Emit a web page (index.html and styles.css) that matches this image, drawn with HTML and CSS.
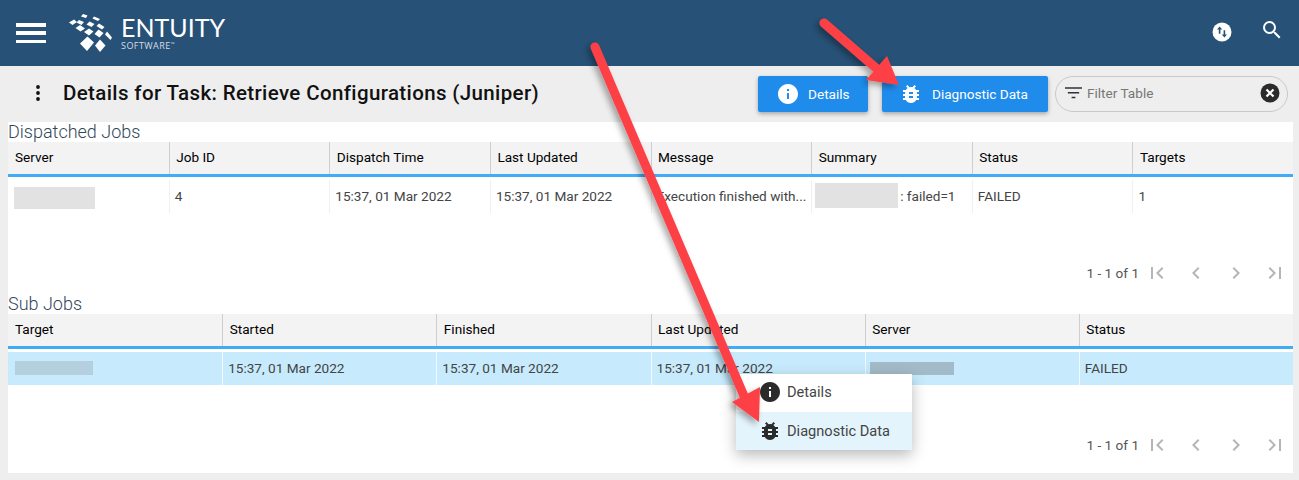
FILE: index.html
```html
<!DOCTYPE html>
<html lang="en">
<head>
<meta charset="utf-8">
<title>Details for Task</title>
<link rel="stylesheet" href="styles.css">
</head>
<body>
<header class="topbar">
  <div class="brand">
    <button class="hamburger" aria-label="Menu"><span></span><span></span><span></span></button>
    <svg class="logo-mark" viewBox="0 0 44 38" aria-hidden="true">
      <g fill="#fff">
        <path d="M14 0l4.500 1.500-1.500 2.500-5-1.500z"/><path d="M25 2.500l6 2.500-2 2-5.500-2.500z"/>
        <path d="M0 8.500l5-3 3 2.500-4.500 3z"/><path d="M10 6l5 2-2.500 3-5-2.500z"/><path d="M20.500 7.500l5 2.500-3 3-5-2.500z"/><path d="M30 9.500l5.500 3.500-2.500 2.500-5.500-3.500z"/>
        <path d="M6.500 14l4.500-3 5 3.500-4.500 3z"/><path d="M20 14.500l4.500 3-4.500 4-5-3.500z"/><path d="M29.500 15.500l5 3.500-4 4.500-5-3.500z"/><path d="M38 17.500l5 6-1.500 2.500-5.500-5.500z"/>
        <path d="M18.500 22.500l6.500 6-7 8.500-7-7.500z"/><path d="M31 25.500l5.500 6-5.500 6.500-5-6.500z"/>
      </g>
    </svg>
    <div class="wordmark">
      <div class="wordmark-main">ENTUITY</div>
      <div class="wordmark-sub">SOFTWARE<sup>™</sup></div>
    </div>
  </div>
  <div class="top-actions">
    <svg class="ico-sync" viewBox="0 0 20 20" aria-hidden="true">
      <circle cx="10" cy="10" r="9.500" fill="#fff"/>
      <path d="M7.600 4.500L5 7.400h1.800v4.300h1.600V7.400h1.800z" fill="#275176"/>
      <path d="M12.400 15.500l2.600-2.900h-1.800V8.300h-1.600v4.300H9.800z" fill="#275176"/>
    </svg>
    <svg class="ico-search" viewBox="0 0 24 24" aria-hidden="true">
      <path fill="#fff" d="M15.500 14h-.79l-.28-.27A6.470 6.470 0 0016 9.500 6.500 6.500 0 109.500 16c1.610 0 3.090-.59 4.230-1.570l.27.28v.79l5 4.990L20.490 19l-4.990-5zm-6 0C7.010 14 5 11.990 5 9.500S7.010 5 9.500 5 14 7.010 14 9.500 11.990 14 9.500 14z"/>
    </svg>
  </div>
</header>

<section class="toolbar">
  <div class="title-group">
    <svg class="ico-more" viewBox="0 0 6 18" aria-hidden="true"><circle cx="3" cy="3" r="1.900"/><circle cx="3" cy="9" r="1.900"/><circle cx="3" cy="15" r="1.900"/></svg>
    <h1 class="page-title">Details for Task: Retrieve Configurations (Juniper)</h1>
  </div>
  <div class="toolbar-actions">
    <button class="btn btn-details">
      <svg class="btn-ico" viewBox="0 0 24 24" aria-hidden="true"><path fill="#fff" d="M12 2C6.480 2 2 6.480 2 12s4.480 10 10 10 10-4.480 10-10S17.520 2 12 2zm1 15h-2v-6h2v6zm0-8h-2V7h2v2z"/></svg>
      <span>Details</span>
    </button>
    <button class="btn btn-diag">
      <svg class="btn-ico" viewBox="0 0 24 24" aria-hidden="true"><path fill="#fff" d="M20 8h-2.810a5.985 5.985 0 00-1.820-1.960L17 4.410 15.590 3l-2.170 2.170a6.002 6.002 0 00-2.830 0L8.410 3 7 4.410l1.620 1.630C7.880 6.550 7.260 7.220 6.810 8H4v2h2.090c-.05.330-.09.660-.09 1v1H4v2h2v1c0 .34.040.67.090 1H4v2h2.810c1.040 1.790 2.970 3 5.190 3s4.150-1.210 5.190-3H20v-2h-2.090c.05-.33.090-.66.090-1v-1h2v-2h-2v-1c0-.34-.04-.67-.09-1H20V8zm-6 8h-4v-2h4v2zm0-4h-4v-2h4v2z"/></svg>
      <span>Diagnostic Data</span>
    </button>
    <div class="filter">
      <svg class="ico-filter" viewBox="0 0 18 12" aria-hidden="true"><path fill="#333" d="M0 0h18v1.500H0zM3 5h12v1.500H3zM7 10h4v1.500H7z"/></svg>
      <span class="filter-text">Filter Table</span>
      <svg class="ico-clear" viewBox="0 0 20 20" aria-hidden="true"><circle cx="10" cy="10" r="9.500" fill="#2b2b2b"/><path d="M6.500 6.500l7 7M13.500 6.500l-7 7" stroke="#fff" stroke-width="2.200" fill="none"/></svg>
    </div>
  </div>
</section>

<main class="panel">
  <section class="block block-first">
    <h2 class="block-title">Dispatched Jobs</h2>
    <div class="grid grid-8 head">
      <div>Server</div><div>Job ID</div><div>Dispatch Time</div><div>Last Updated</div><div>Message</div><div>Summary</div><div>Status</div><div>Targets</div>
    </div>
    <div class="grid grid-8 row">
      <div><span class="blur blur-a"></span></div>
      <div>4</div>
      <div>15:37, 01 Mar 2022</div>
      <div>15:37, 01 Mar 2022</div>
      <div class="clip">Execution finished with...</div>
      <div class="summary"><span class="blur blur-b"></span><span>: failed=1</span></div>
      <div>FAILED</div>
      <div>1</div>
    </div>
    <div class="pager">
      <span class="pager-text">1 - 1 of 1</span>
      <svg class="pg" viewBox="0 0 24 24" aria-hidden="true"><path d="M18.410 16.590L13.820 12l4.590-4.590L17 6l-6 6 6 6zM6 6h2v12H6z"/></svg>
      <svg class="pg" viewBox="0 0 24 24" aria-hidden="true"><path d="M15.410 7.410L14 6l-6 6 6 6 1.410-1.410L10.830 12z"/></svg>
      <svg class="pg" viewBox="0 0 24 24" aria-hidden="true"><path d="M10 6L8.590 7.410 13.170 12l-4.580 4.590L10 18l6-6z"/></svg>
      <svg class="pg" viewBox="0 0 24 24" aria-hidden="true"><path d="M5.590 7.410L10.180 12l-4.590 4.590L7 18l6-6-6-6zM16 6h2v12h-2z"/></svg>
    </div>
  </section>

  <section class="block">
    <h2 class="block-title">Sub Jobs</h2>
    <div class="grid grid-6 head">
      <div>Target</div><div>Started</div><div>Finished</div><div>Last Updated</div><div>Server</div><div>Status</div>
    </div>
    <div class="grid grid-6 row row-selected">
      <div><span class="blur blur-c"></span></div>
      <div>15:37, 01 Mar 2022</div>
      <div>15:37, 01 Mar 2022</div>
      <div>15:37, 01 Mar 2022</div>
      <div><span class="blur blur-d"></span></div>
      <div>FAILED</div>
    </div>
    <div class="pager">
      <span class="pager-text">1 - 1 of 1</span>
      <svg class="pg" viewBox="0 0 24 24" aria-hidden="true"><path d="M18.410 16.590L13.820 12l4.590-4.590L17 6l-6 6 6 6zM6 6h2v12H6z"/></svg>
      <svg class="pg" viewBox="0 0 24 24" aria-hidden="true"><path d="M15.410 7.410L14 6l-6 6 6 6 1.410-1.410L10.830 12z"/></svg>
      <svg class="pg" viewBox="0 0 24 24" aria-hidden="true"><path d="M10 6L8.590 7.410 13.170 12l-4.580 4.590L10 18l6-6z"/></svg>
      <svg class="pg" viewBox="0 0 24 24" aria-hidden="true"><path d="M5.590 7.410L10.180 12l-4.590 4.590L7 18l6-6-6-6zM16 6h2v12h-2z"/></svg>
    </div>
  </section>
</main>

<div class="ctx-menu">
  <div class="ctx-item ctx-first">
    <svg class="ctx-ico" viewBox="0 0 24 24" aria-hidden="true"><path fill="#2b2b2b" d="M12 2C6.480 2 2 6.480 2 12s4.480 10 10 10 10-4.480 10-10S17.520 2 12 2zm1 15h-2v-6h2v6zm0-8h-2V7h2v2z"/></svg>
    <span>Details</span>
  </div>
  <div class="ctx-item ctx-hover">
    <svg class="ctx-ico" viewBox="0 0 24 24" aria-hidden="true"><path fill="#2b2b2b" d="M20 8h-2.810a5.985 5.985 0 00-1.820-1.960L17 4.410 15.590 3l-2.170 2.170a6.002 6.002 0 00-2.830 0L8.410 3 7 4.410l1.620 1.630C7.880 6.550 7.260 7.220 6.810 8H4v2h2.090c-.05.330-.09.660-.09 1v1H4v2h2v1c0 .34.040.67.090 1H4v2h2.810c1.040 1.790 2.970 3 5.190 3s4.150-1.210 5.190-3H20v-2h-2.090c.05-.33.090-.66.090-1v-1h2v-2h-2v-1c0-.34-.04-.67-.09-1H20V8zm-6 8h-4v-2h4v2zm0-4h-4v-2h4v2z"/></svg>
    <span>Diagnostic Data</span>
  </div>
</div>

<svg class="arrows" viewBox="0 0 1299 480" aria-hidden="true">
  <defs>
    <filter id="arrow-shadow" x="-20%" y="-20%" width="140%" height="140%">
      <feDropShadow dx="-3" dy="3" stdDeviation="3" flood-color="#000" flood-opacity=".35"/>
    </filter>
  </defs>
  <g filter="url(#arrow-shadow)" fill="#fc4145" stroke="none">
    <path d="M595 47L744 396" stroke="#fc4145" stroke-width="9" stroke-linecap="round" fill="none"/>
    <path d="M732 402L760 387 759 422z"/>
    <path d="M824 23L884 75" stroke="#fc4145" stroke-width="9" stroke-linecap="round" fill="none"/>
    <path d="M866 80L887 56 899 85z"/>
  </g>
</svg>
</body>
</html>
```

FILE: styles.css
```css
* { box-sizing: border-box; }
html, body { margin: 0; padding: 0; }
body {
  width: 1299px;
  height: 480px;
  overflow: hidden;
  position: relative;
  background: #eeeeee;
  font-family: Roboto, "Liberation Sans", sans-serif;
  font-size: 13.600px;
  color: #444;
}

.topbar {
  height: 66px;
  background: #275176;
  display: flex;
  justify-content: space-between;
  align-items: center;
  padding: 0 15px 0 16px;
}
.brand { display: flex; align-items: center; }
.hamburger {
  width: 30px;
  height: 20px;
  padding: 0;
  border: 0;
  background: none;
  display: flex;
  flex-direction: column;
  justify-content: space-between;
  margin-right: 23px;
}
.hamburger span { display: block; height: 3.500px; background: #fff; }
.logo-mark { width: 44px; height: 38px; margin-right: 8px; }
.wordmark { color: #fff; line-height: 1; margin-top: 0; }
.wordmark-main { font-family: Lato, sans-serif; font-size: 25px; line-height: 25px; }
.wordmark-sub { font-family: "Open Sans", sans-serif; font-size: 9px; letter-spacing: .45px; color: #d5dde5; line-height: 12px; }
.wordmark-sub sup { font-size: 5px; vertical-align: 3px; line-height: 0; }
.top-actions { display: flex; align-items: center; gap: 28px; }
.ico-sync { width: 20px; height: 20px; margin-top: -2px; }
.ico-search { width: 24px; height: 24px; margin-top: -6px; }

.toolbar {
  height: 56px;
  display: flex;
  justify-content: space-between;
  padding: 10px 11px 0 35px;
}
.title-group { display: flex; align-items: center; height: 34px; }
.ico-more { width: 6px; height: 18px; margin-right: 22px; fill: #111; }
.page-title { margin: 0; font-size: 20.500px; font-weight: 500; color: #111; letter-spacing: .37px; }
.toolbar-actions { display: flex; }
.btn {
  height: 36px;
  border: 0;
  border-radius: 2px;
  background: #1f8ceb;
  color: #fff;
  font: 13.600px Roboto, sans-serif;
  display: flex;
  align-items: center;
  box-shadow: 0 2px 4px rgba(0,0,0,.3);
}
.btn-details { width: 110px; margin-right: 14px; padding-left: 20px; }
.btn-diag { width: 166px; margin-right: 7px; padding-left: 18px; }
.btn-ico { width: 24px; height: 24px; flex: none; }
.btn-details .btn-ico { margin-right: 8px; margin-left: -2px; }
.btn-diag .btn-ico { margin-right: 9px; margin-left: -1px; }
.filter {
  width: 233px;
  height: 36px;
  border: 1px solid #c9c9c9;
  border-radius: 18px;
  display: flex;
  align-items: center;
  padding: 0 7px 3px 9px;
  color: #777;
}
.ico-filter { width: 17px; height: 12px; margin-right: 5px; }
.filter-text { flex: 1; }
.ico-clear { width: 20px; height: 20px; }

.panel {
  margin: 0 6px 0 8px;
  height: 351px;
  background: #fff;
}
.block-title {
  margin: 0;
  height: 20px;
  font-size: 18px;
  font-weight: 300;
  line-height: 20px;
  color: #33475b;
}
.grid { display: grid; }
.grid-8 { grid-template-columns: repeat(8, 1fr); }
.grid-6 { grid-template-columns: repeat(6, 1fr); }
.head {
  height: 35px;
  background: #f3f3f3;
  border-bottom: 3px solid #42abf7;
  color: #000;
  font-weight: 400;
}
.head > div {
  display: flex;
  align-items: center;
  padding: 0 0 3px 7px;
}
.head > div + div {
  padding-left: 6.500px;
  border-left: 1px solid #cfcfcf;
}
.row { height: 33px; margin-top: 3px; }
.row > div {
  display: flex;
  align-items: center;
  padding: 0 0 1px 6px;
  min-width: 0;
  white-space: nowrap;
}
.row > div + div {
  padding-left: 5px;
  border-left: 1px solid #f0f0f0;
}
.clip { overflow: hidden; }
.row-selected { background: #c7ebfd; }
.row-selected > div + div { border-left-color: #eef8fe; }
.blur { display: inline-block; flex: none; }
.blur-a { width: 81px; height: 22px; background: #e2e2e2; margin-top: 3px; }
.blur-b { width: 83px; height: 25px; background: #e2e2e2; margin: -1px 0 0 -2px; }
.blur-c { width: 78px; height: 14px; background: #b4cfdd; margin-left: 1px; }
.blur-d { width: 84px; height: 13px; background: #a3bbc8; margin-left: -1px; }
.summary span:last-child { margin-left: 2px; }
.pager {
  height: 81px;
  padding: 48px 6px 0 0;
  display: flex;
  justify-content: flex-end;
  align-items: flex-start;
  color: #555;
}
.pager-text { line-height: 24px; margin-right: 6px; }
.pg { width: 24px; height: 24px; fill: #b5b5b5; margin-left: 15.300px; }
.pg:first-of-type { margin-left: 0; }

.ctx-menu {
  position: absolute;
  left: 736px;
  top: 374px;
  width: 176px;
  background: #fff;
  box-shadow: 0 5px 14px rgba(0,0,0,.28);
  color: #444;
  font-size: 14.600px;
}
.ctx-item { height: 38px; display: flex; align-items: center; padding-left: 22px; }
.ctx-first { padding-bottom: 2px; }
.ctx-hover { background: #e3f4fd; }
.ctx-ico { width: 24px; height: 24px; margin-right: 5px; }

.arrows {
  position: absolute;
  left: 0;
  top: 0;
  width: 1299px;
  height: 480px;
  pointer-events: none;
}
```
